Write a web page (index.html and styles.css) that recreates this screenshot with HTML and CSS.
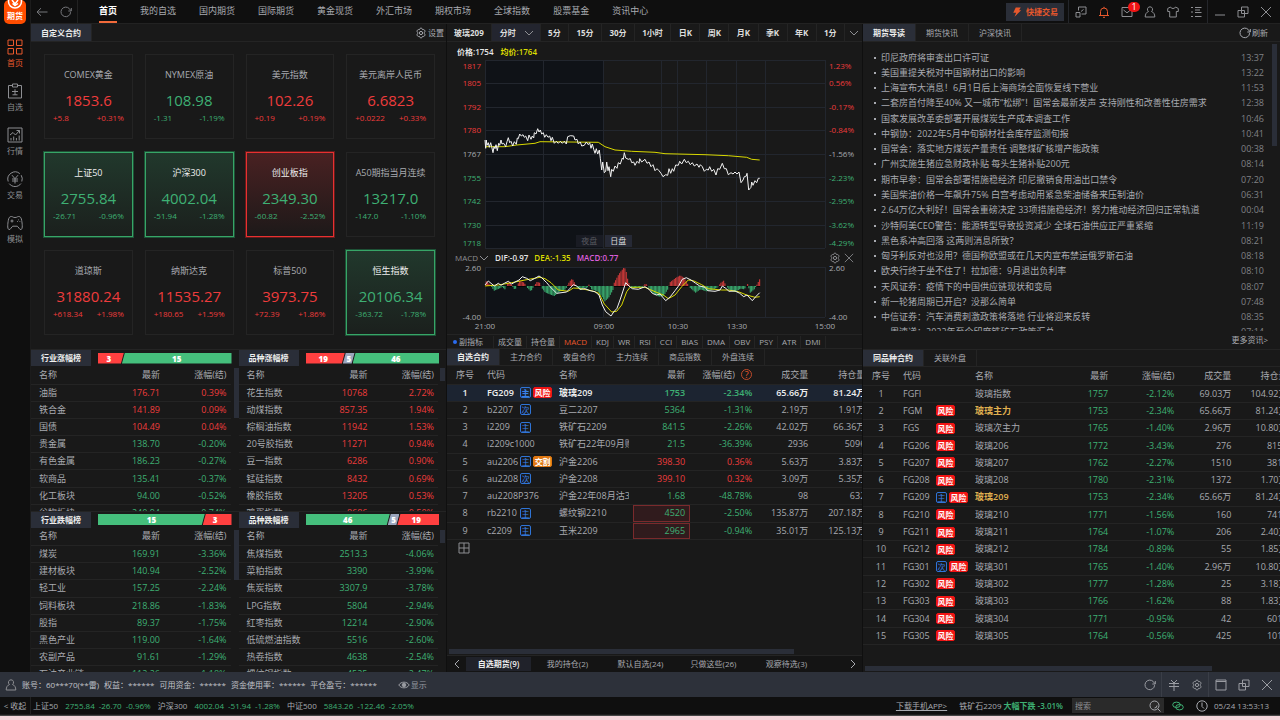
FILE: index.html
```html
<!DOCTYPE html>
<html lang="zh-CN">
<head>
<meta charset="utf-8">
<title>期货行情</title>
<link rel="stylesheet" href="styles.css">
</head>
<body>
<svg class="sprite" aria-hidden="true">
  <symbol id="i-back" viewBox="0 0 12 12"><path d="M11.5 6H1M5 2.200 1 6l4 3.800"/></symbol>
  <symbol id="i-reload" viewBox="0 0 12 12"><path d="M10.600 6.200A4.800 4.800 0 1 1 9.300 2.600L10.800 4.600M11.300 2v3H8.300"/></symbol>
  <symbol id="i-gear" viewBox="0 0 12 12"><path d="M6 1.200c1 0 1.300.5 1.500 1.400.9-.2 1.700-.1 2.200.8.5.9.2 1.500-.4 2.100v1c.6.6.9 1.200.4 2.100-.5.9-1.300 1-2.200.8-.2.9-.5 1.400-1.500 1.400s-1.300-.5-1.500-1.400c-.9.2-1.700.1-2.200-.8-.5-.9-.2-1.500.4-2.100v-1c-.6-.6-.9-1.200-.4-2.100.5-.9 1.300-1 2.200-.8C4.700 1.700 5 1.200 6 1.200Z"/><circle cx="6" cy="6" r="1.600"/></symbol>
  <symbol id="i-home" viewBox="0 0 16 16"><path d="M1 1h5.500v5.500H1zM9.500 1H15v5.500H9.500zM1 9.500h5.500V15H1zM9.500 9.500H15V15H9.500z"/></symbol>
  <symbol id="i-pick" viewBox="0 0 16 16"><path d="M5 2.500H1.500v12.500h13V2.500H11M5.500 1h5v3h-5zM8 6.200v5.600M5 8.500h6M5.500 11.800h5"/></symbol>
  <symbol id="i-quote" viewBox="0 0 16 16"><path d="M1 1h14v14H1zM3 8l3-2.500L8.500 8 12.500 3.500M9.500 3.500h3v3M4 13.500V11M6.700 13.500V9.500M9.400 13.500V11M12.200 13.500V8.500"/></symbol>
  <symbol id="i-trade" viewBox="0 0 16 16"><path d="M14 12.500A7.300 7.300 0 0 1 2.200 12.600M1.200 10.500A7.300 7.300 0 0 1 12.800 2.600M14.200 4.200a7.300 7.300 0 0 1 .6 6.300M5 4.200l3 3.500 3-3.500M8 7.700V12.500M5 8h6M5 10h6"/></symbol>
  <symbol id="i-game" viewBox="0 0 16 16"><path d="M4.500 1.500c-2 0-2.800 1.300-3.200 4-.5 3-1.200 8 .5 9 1.700.8 2.700-3 4-3.300h4.400c1.300.3 2.300 4.100 4 3.300 1.700-1 1-6 .5-9-.4-2.700-1.200-4-3.200-4-1.200 0-1.300 1-3.500 1S5.700 1.500 4.500 1.500ZM5 4.500v3M3.500 6h3M11.500 4.500v.8M10 6.500h.8M12.500 6.500h.8"/></symbol>
  <symbol id="i-pop" viewBox="0 0 12 12"><path d="M3.500 1h7.500v7H6.500M3.500 1v3.500M1 6.500h4V11H1zM6 5.500l2.500-2"/></symbol>
  <symbol id="i-bell" viewBox="0 0 12 12"><path d="M1 9.500h10M2.500 9.500V5.500a3.500 3.500 0 0 1 7 0v4M6 2V.8M5 11.300h2"/></symbol>
  <symbol id="i-mail" viewBox="0 0 12 12"><path d="M1 1.500h10v9H1zM2.500 4 6 6.800 9.500 4"/></symbol>
  <symbol id="i-user" viewBox="0 0 12 12"><path d="M6 .8a2.600 2.600 0 0 1 1.500 4.700C9.500 6.200 10.800 8 10.800 11H1.200c0-3 1.300-4.800 3.300-5.500A2.600 2.600 0 0 1 6 .8Z"/></symbol>
  <symbol id="i-shirt" viewBox="0 0 12 12"><path d="M3.500 1 .7 2.500v3h2V11h6.600V5.500h2v-3L8.500 1C8 3 4 3 3.500 1Z"/></symbol>
  <symbol id="i-list" viewBox="0 0 12 12"><path d="M1 1.500h2M1 6h2M1 10.500h2M5 1.500h6.500M5 4h5M5 6.500h6.500M5 10.500h6.500"/></symbol>
  <symbol id="i-min" viewBox="0 0 12 12"><path d="M1 9h10"/></symbol>
  <symbol id="i-restore" viewBox="0 0 12 12"><path d="M4.500 1H11v6.500H4.500zM1 4.500h6.500V11H1z"/></symbol>
  <symbol id="i-max" viewBox="0 0 12 12"><path d="M1 1h10v10H1zM1 2.500h10"/></symbol>
  <symbol id="i-close" viewBox="0 0 12 12"><path d="m1 1 10 10M11 1 1 11"/></symbol>
  <symbol id="i-yuan" viewBox="0 0 12 12"><path d="M3 1l3 3 3-3M6 4v8M1 4.500h10M1 7.500h10"/></symbol>
  <symbol id="i-down" viewBox="0 0 10 10"><path d="m1 3 4 4 4-4"/></symbol>
  <symbol id="i-left" viewBox="0 0 10 10"><path d="M7 1 3 5l4 4"/></symbol>
  <symbol id="i-right" viewBox="0 0 10 10"><path d="m3 1 4 4-4 4"/></symbol>
  <symbol id="i-add" viewBox="0 0 12 12"><path d="M1 1h10v10H1zM6 1v10M1 6h10"/></symbol>
  <symbol id="i-eye" viewBox="0 0 12 12"><path d="M.8 6C3 2.200 9 2.200 11.200 6 9 9.800 3 9.800.8 6Z"/><circle cx="6" cy="6" r="1.800" fill="currentColor"/></symbol>
  <symbol id="i-search" viewBox="0 0 12 12"><circle cx="5.500" cy="5.500" r="4.500"/><path d="m8.800 8.800 2.700 2.700M5.500 8A2.500 2.500 0 0 0 8 5.500"/></symbol>
  <symbol id="i-link" viewBox="0 0 12 12"><ellipse cx="4.500" cy="4.800" rx="3.800" ry="2.700"/><ellipse cx="7.500" cy="7.200" rx="3.800" ry="2.700"/></symbol>
  <symbol id="i-clock" viewBox="0 0 12 12"><circle cx="6" cy="6" r="5.200"/><path d="M6 2.500V6.500L8 8.500"/></symbol>
  <symbol id="i-bolt" viewBox="0 0 12 12"><path d="M4.500.5h6L8.500 4H11L3 11.800 5 7H1.500Z" fill="currentColor" stroke="none"/></symbol>
</svg>

<div class="app">
  <aside class="side">
    <div class="logo">
      <svg class="logo-mark" viewBox="0 0 16 9"><circle cx="8" cy="1.500" r="6.500"/><path d="M5 0 8 4l3-4M5.500 3.500 8 5.500l3-2"/></svg>
      <span>期货</span>
    </div>
    <a class="side-item on" href="#"><svg class="icon lg"><use href="#i-home"/></svg>首页</a>
    <a class="side-item" href="#"><svg class="icon lg"><use href="#i-pick"/></svg>自选</a>
    <a class="side-item" href="#"><svg class="icon lg"><use href="#i-quote"/></svg>行情</a>
    <a class="side-item" href="#"><svg class="icon lg"><use href="#i-trade"/></svg>交易</a>
    <a class="side-item" href="#"><svg class="icon lg"><use href="#i-game"/></svg>模拟</a>
  </aside>

  <header class="top">
    <div class="history">
      <button aria-label="后退"><svg class="icon"><use href="#i-back"/></svg></button>
      <button aria-label="重新加载"><svg class="icon"><use href="#i-reload"/></svg></button>
    </div>
    <nav class="nav">
      <a class="on" href="#">首页</a><a href="#">我的自选</a><a href="#">国内期货</a><a href="#">国际期货</a><a href="#">黄金现货</a><a href="#">外汇市场</a><a href="#">期权市场</a><a href="#">全球指数</a><a href="#">股票基金</a><a href="#">资讯中心</a>
    </nav>
    <button class="quick"><svg class="icon sm"><use href="#i-bolt"/></svg>快捷交易</button>
    <div class="tools">
      <button aria-label="弹出"><svg class="icon"><use href="#i-pop"/></svg></button>
      <button class="accent" aria-label="提醒"><svg class="icon"><use href="#i-bell"/></svg></button>
      <button class="mail" aria-label="消息"><svg class="icon"><use href="#i-mail"/></svg><span class="count">1</span></button>
      <button aria-label="用户"><svg class="icon"><use href="#i-user"/></svg></button>
      <button aria-label="皮肤"><svg class="icon"><use href="#i-shirt"/></svg></button>
      <button aria-label="菜单"><svg class="icon"><use href="#i-list"/></svg></button>
    </div>
    <div class="tools window">
      <button aria-label="最小化"><svg class="icon"><use href="#i-min"/></svg></button>
      <button aria-label="还原"><svg class="icon"><use href="#i-restore"/></svg></button>
      <button aria-label="关闭"><svg class="icon"><use href="#i-close"/></svg></button>
    </div>
  </header>

  <main class="panels">
    <section class="panel left">
      <div class="bar">
        <button class="tab on">自定义合约</button>
        <button class="bar-action"><svg class="icon"><use href="#i-gear"/></svg>设置</button>
      </div>
      <div class="cards" id="cards"></div>
      <div class="ranks" id="ranks"></div>
    </section>

    <section class="panel center">
      <div class="bar periods">
        <span class="symbol">玻璃209</span>
        <button class="on">分时 <svg class="icon sm"><use href="#i-down"/></svg></button><button>5分</button><button>15分</button><button>30分</button><button>1小时</button><button>日K</button><button>周K</button><button>月K</button><button>季K</button><button>年K</button><button>1分</button><button class="more" aria-label="更多周期"><svg class="icon sm"><use href="#i-down"/></svg></button>
      </div>
      <div class="legend"><span class="white">价格:1754</span><span class="yellow">均价:1764</span></div>
      <div class="plot">
        <svg id="price" viewBox="447 60 415 190"></svg>
        <div class="sessions"><button>夜盘</button><button class="on">日盘</button></div>
      </div>
      <div class="legend macd">
        <button class="ind">MACD<svg class="icon sm"><use href="#i-down"/></svg></button>
        <span class="white">DIF:-0.97</span><span class="yellow">DEA:-1.35</span><span class="pink">MACD:0.77</span>
        <span class="legend-tools"><button aria-label="指标设置"><svg class="icon"><use href="#i-gear"/></svg></button><button aria-label="关闭指标"><svg class="icon sm"><use href="#i-close"/></svg></button></span>
      </div>
      <div class="plot"><svg id="macd" viewBox="447 264 415 70"></svg></div>
      <div class="indicators">
        <button class="sub">副指标</button><button>成交量</button><button>持仓量</button><button class="on">MACD</button><button>KDJ</button><button>WR</button><button>RSI</button><button>CCI</button><button>BIAS</button><button>DMA</button><button>OBV</button><button>PSY</button><button>ATR</button><button>DMI</button>
      </div>
      <div class="bar tabs">
        <button class="tab on">自选合约</button><button class="tab">主力合约</button><button class="tab">夜盘合约</button><button class="tab">主力连续</button><button class="tab">商品指数</button><button class="tab">外盘连续</button>
      </div>
      <div class="table-box">
        <table class="quotes watch">
          <colgroup><col class="w36"><col class="w72"><col class="w78"><col class="w57"><col class="w67"><col class="w56"><col class="w57"></colgroup>
          <thead><tr><th class="c">序号</th><th>代码</th><th>名称</th><th class="r">最新</th><th class="r">涨幅(结) <span class="help">?</span></th><th class="r">成交量</th><th class="r">持仓量</th></tr></thead>
          <tbody id="watch"></tbody>
        </table>
        <button class="add" aria-label="添加合约"><svg class="icon"><use href="#i-add"/></svg></button>
      </div>
      <div class="hscroll"><i></i></div>
      <div class="groups">
        <button class="arrow" aria-label="上一组"><svg class="icon sm"><use href="#i-left"/></svg></button>
        <button class="on">自选期货(9)</button><button>我的持仓(2)</button><button>默认自选(24)</button><button>只做这些(26)</button><button>观察待选(3)</button>
        <button class="arrow next" aria-label="下一组"><svg class="icon sm"><use href="#i-right"/></svg></button>
      </div>
    </section>

    <section class="panel right">
      <div class="bar tabs">
        <button class="tab on">期货导读</button><button class="tab">期货快讯</button><button class="tab">沪深快讯</button>
        <button class="bar-action"><svg class="icon"><use href="#i-reload"/></svg>刷新</button>
      </div>
      <div class="news-box"><ul class="news" id="news"></ul><i class="vscroll tall"></i></div>
      <a class="news-more" href="#">更多资讯&gt;</a>
      <div class="bar tabs">
        <button class="tab on">同品种合约</button><button class="tab">关联外盘</button>
      </div>
      <div class="table-box">
        <table class="quotes related">
          <colgroup><col class="w36"><col class="w72"><col class="w90"><col class="w52"><col class="w66"><col class="w57"><col class="w56"></colgroup>
          <thead><tr><th class="c">序号</th><th>代码</th><th>名称</th><th class="r">最新</th><th class="r">涨幅(结)</th><th class="r">成交量</th><th class="r">持仓量</th></tr></thead>
          <tbody id="related"></tbody>
        </table>
      </div>
      <div class="hscroll"><i></i></div>
    </section>
  </main>

  <div class="account">
    <svg class="icon"><use href="#i-user"/></svg>
    <span>账号：60***70(**雷)</span><span>权益：******</span><span>可用资金：******</span><span>资金使用率：******</span><span>平仓盈亏：******</span>
    <button class="show"><svg class="icon"><use href="#i-eye"/></svg>显示</button>
    <div class="tools push"><button aria-label="刷新账户"><svg class="icon"><use href="#i-reload"/></svg></button></div>
    <div class="tools"><button aria-label="资金"><svg class="icon"><use href="#i-yuan"/></svg></button><button aria-label="设置"><svg class="icon"><use href="#i-gear"/></svg></button></div>
    <div class="tools"><button aria-label="最大化"><svg class="icon"><use href="#i-max"/></svg></button><button aria-label="还原"><svg class="icon"><use href="#i-restore"/></svg></button><button aria-label="关闭"><svg class="icon"><use href="#i-close"/></svg></button></div>
  </div>

  <footer class="status">
    <button class="fold">&lt; 收起</button>
    <span class="idx">上证50 <b>2755.84</b><b>-26.70</b><b>-0.96%</b></span>
    <span class="idx">沪深300 <b>4002.04</b><b>-51.94</b><b>-1.28%</b></span>
    <span class="idx">中证500 <b>5843.26</b><b>-122.46</b><b>-2.05%</b></span>
    <a class="download" href="#">下载手机APP&gt;</a>
    <span class="alert">铁矿石2209 <em>大幅下跌 -3.01%</em></span>
    <label class="search"><input type="text" placeholder="搜索" aria-label="搜索"><svg class="icon"><use href="#i-search"/></svg></label>
    <svg class="icon net"><use href="#i-link"/></svg>
    <svg class="icon"><use href="#i-clock"/></svg>
    <time>05/24 13:53:13</time>
  </footer>
  <div class="edge"></div>
</div>
<script src="app.js"></script>
</body>
</html>
```

FILE: styles.css
```css
* { box-sizing: border-box; }
body {
  margin: 0;
  background: #0f0f0f;
  color: #a8aab0;
  font: 9px/12px "Open Sans", "Noto Sans CJK SC", sans-serif;
}
button, input { font: inherit; color: inherit; background: none; border: 0; padding: 0; margin: 0; }
button { white-space: nowrap; display: flex; align-items: center; justify-content: center; }
a { color: inherit; text-decoration: none; }
.sprite { display: none; }
.icon { width: 12px; height: 12px; flex: none; fill: none; stroke: currentColor; stroke-width: 1; }
.icon.sm { width: 10px; height: 10px; }
.icon.lg { width: 16px; height: 16px; }
.up { color: #ee3c3c; }
.down { color: #3eb074; }
.white { color: #e6e6e6; }
.yellow { color: #dddd00; }
.pink { color: #dc5fdc; }

.app {
  height: 100vh;
  display: grid;
  grid-template-columns: 31px minmax(0, 1fr);
  grid-template-rows: 24px minmax(0, 1fr) 25px 18px 5px;
  overflow: hidden;
}

.side { grid-row: 1 / 3; display: flex; flex-direction: column; align-items: center; border-right: 1px solid #1c1c1c; font-size: 8px; }
.logo { width: 22px; height: 24px; margin-bottom: 15px; background: #ff4d00; border-radius: 5px; color: #fff; font-weight: 700; text-align: center; }
.logo-mark { display: block; width: 16px; height: 9px; margin: 0 auto; fill: none; stroke: #fff; stroke-width: 1.5; }
.logo span { display: block; line-height: 13px; }
.side-item { display: flex; flex-direction: column; align-items: center; height: 44px; gap: 2px; color: #8d8e92; }
.side-item.on { color: #e8582c; }

.top { display: flex; align-items: center; border-bottom: 1px solid #222; }
.history { display: flex; align-items: center; gap: 12px; padding: 0 5px 0 5px; height: 23px; border-right: 1px solid #222; color: #77787c; }
.nav { display: flex; gap: 23px; margin-left: 21px; flex: 1; }
.nav a { line-height: 21px; border-bottom: 2px solid transparent; white-space: nowrap; }
.nav .on { color: #fff; font-weight: 700; border-color: #f26a3a; }
.quick { width: 58px; height: 18px; gap: 4px; background: #2a2e38; color: #e8582c; font-size: 8px; font-weight: 700; margin-right: 4px; }
.tools { display: flex; height: 100%; border-left: 1px solid #24262b; color: #8d8e92; }
.tools button { width: 23px; }
.tools .accent { color: #e8582c; }
.window { margin-right: 3px; }
.mail { position: relative; }
.count { position: absolute; top: 2px; right: -2px; width: 12px; height: 10px; border-radius: 5px; background: #f01414; color: #fff; font-size: 9px; line-height: 10px; text-align: center; }

.panels { display: grid; grid-template-columns: minmax(0, 415fr) minmax(0, 415fr) minmax(0, 417fr); gap: 1px; min-height: 0; }
.panel { background: #191919; display: flex; flex-direction: column; min-height: 0; overflow: hidden; }

.bar { display: flex; height: 18px; flex: none; border-bottom: 1px solid #242424; font-size: 8px; }
.tab { padding: 0 10px; border-right: 1px solid #242424; }
.tab.on { background: #2a2e38; color: #eee; font-weight: 700; }
.bar-action { margin-left: auto; gap: 1px; padding-right: 2px; }
.right .bar-action { padding-right: 12px; }

.cards { display: grid; grid-template-columns: repeat(4, 1fr); gap: 13px 12px; padding: 12px 11px 14px 13px; flex: none; }
.card { height: 85px; padding: 13px 8px 0; border: 1px solid #242424; text-align: center; }
.card h3 { margin: 0 -6px 7px; font: inherit; line-height: 14px; white-space: nowrap; }
.card strong { display: block; font-size: 15px; font-weight: 400; line-height: 22px; }
.card div { display: flex; justify-content: space-between; margin-top: -1px; font-size: 8px; line-height: 16px; }
.card.hot h3 { color: #eee; }
.card.hot.fall { border: 1px solid #37a567; background: linear-gradient(#21382c, #1b201d); outline: 1px solid #1e5136; }
.card.hot.rise { border: 1px solid #e83030; background: linear-gradient(#492122, #1d1919); outline: 1px solid #611c1c; }

.ranks { flex: 1; min-height: 0; display: grid; grid-template: minmax(0, 1fr) minmax(0, 1fr) / 1fr 1fr; }
.rank { min-width: 0; overflow: hidden; border-top: 1px solid #242424; position: relative; }
.rank header { display: flex; align-items: center; height: 16px; gap: 7px; padding-right: 7px; font-size: 8px; font-weight: 700; }
.rank header span { width: 60px; line-height: 16px; background: #2a2e38; color: #eee; text-align: center; }
.ratio { flex: 1; display: flex; height: 11px; color: #fff; text-align: center; line-height: 11px; }
.ratio b { clip-path: polygon(3px 0, 100% 0, calc(100% - 3px) 100%, 0 100%); margin-left: -2px; }
.ratio b:first-child { clip-path: polygon(0 0, 100% 0, calc(100% - 3px) 100%, 0 100%); margin-left: 0; }
.ratio b:last-child { clip-path: polygon(3px 0, 100% 0, 100% 100%, 0 100%); }
.ratio .r { background: #ff4040; }
.ratio .g { background: #45bf7c; }
.ratio .n { background: #9ba6bd; }
.rank table { width: calc(100% - 8px); height: 156px; }
.rank td:first-child, .rank th:first-child { padding-left: 8px; }
.rank .r { padding-right: 4px; }
.vscroll { position: absolute; top: 18px; right: 0; width: 5px; height: 50px; background: #2a2e38; }
.vscroll.short { height: 13px; right: 1px; }
.vscroll.tall { top: 2px; right: 3px; height: 102px; }

table { border-collapse: collapse; table-layout: fixed; }
th, td { padding: 0; border-bottom: 1px solid #242424; font-weight: 400; text-align: left; white-space: nowrap; line-height: 12px; }
th { height: 18px; }
th.r, td.r { text-align: right; }
th.c, td.c { text-align: center; }

.periods { color: #ddd; font-weight: 700; }
.periods > * { flex: 1 0 auto; border-right: 1px solid #242424; padding: 0 3px; line-height: 17px; }
.periods .symbol { flex: none; padding: 0 7px; }
.periods .on { flex: none; width: 49px; background: #23252f; gap: 8px; padding: 0 2px 0 4px; }
.periods .icon { color: #8d8e92; }
.periods .more { flex: none; width: 17px; border: 0; }
.legend { display: flex; align-items: center; gap: 7px; height: 18px; flex: none; padding: 2px 10px 0; font-size: 8px; font-weight: 600; }
.legend.macd { height: 14px; gap: 6px; padding: 1px 8px 0; }
.ind { font-weight: 400; color: #8d8e92; gap: 1px; }
.legend-tools { display: flex; margin-left: auto; gap: 3px; color: #8d8e92; }
.plot { position: relative; flex: none; }
.plot > svg { display: block; width: 100%; font-size: 8px; }
.sessions { position: absolute; left: 31%; bottom: 3px; display: flex; gap: 2px; font-size: 8px; color: #55575e; }
.sessions button { width: 27px; height: 12px; background: #191b23; }
.sessions .on { background: #262935; color: #ddd; }
.grid { stroke: #22262e; }
.gain { fill: #ee3c3c; }
.loss { fill: #3eb074; }
.flat { fill: #a8aab0; }
.line { fill: none; stroke-width: 1; vector-effect: non-scaling-stroke; }
.hist-gain { fill: #bf3636; }
.hist-loss { fill: #37a068; }

.indicators { display: flex; align-items: center; height: 14px; flex: none; padding-left: 6px; font-size: 8px; border-top: 1px solid #242424; }
.indicators button { padding: 0 4px; height: 12px; border-right: 1px solid #242424; }
.indicators .on { color: #e8582c; }
.indicators .sub { padding: 0 10px 0 0; gap: 2px; }
.sub::before { content: ""; width: 4px; height: 4px; border-radius: 2px; background: #2a6cf0; }
.center .tabs { border-top: 1px solid #242424; }

.table-box { flex: 1; min-height: 0; overflow: hidden; }
.w36 { width: 36px; } .w52 { width: 52px; } .w56 { width: 56px; } .w57 { width: 57px; } .w66 { width: 66px; } .w67 { width: 67px; } .w72 { width: 72px; } .w78 { width: 78px; } .w90 { width: 90px; }
.watch { width: 102%; height: 174px; }
.related { width: 103%; height: 278px; }
.quotes td, .quotes th { padding: 0 4px; }
.quotes .r { padding: 0 5px; }
.clip { display: block; overflow: hidden; height: 12px; }
.code { display: inline-flex; gap: 2px; align-items: center; vertical-align: top; height: 12px; }
.code span { min-width: 31px; }
.code i { font-style: normal; font-size: 8px; line-height: 9px; border: 1px solid #2f74d6; border-radius: 2px; color: #3a82ea; width: 11px; height: 11px; text-align: center; }
.code .risk, .code .deliver { width: 19px; background: #f01414; border-color: #f01414; color: #fff; font-weight: 700; }
.code .deliver { background: #e07812; border-color: #e07812; }
.picked td { background: #1c2431; font-weight: 600; }
.picked td:not(.down) { color: #eee; }
.quotes .flash { background: #301b1d; box-shadow: inset 0 0 0 1px #7a2a2c; }
.gold { color: #e0b050; font-weight: 600; }
.help { display: inline-block; width: 11px; height: 11px; margin-left: 4px; border: 1px solid #c04a2a; border-radius: 6px; color: #e8582c; line-height: 9px; text-align: center; }
.add { margin: 2px 11px; color: #8d8e92; }
.hscroll { flex: none; height: 7px; padding: 1px 2px; }
.hscroll i { display: block; width: 84%; height: 5px; background: #2a2e38; }
.groups { display: flex; align-items: center; height: 17px; flex: none; border-top: 1px solid #242424; background: #141414; font-size: 8px; }
.groups button { width: 73px; height: 14px; }
.groups .on { width: 65px; background: #20222a; color: #eee; font-weight: 600; }
.groups .arrow { width: 19px; }
.groups .next { margin-left: auto; }

.news-box { position: relative; height: 289px; flex: none; overflow: hidden; padding: 8px 16px 0 11px; }
.news { list-style: none; margin: 0; padding: 0; height: 290px; display: grid; grid-auto-rows: 1fr; }
.news li { display: flex; align-items: center; }
.news li::before { content: ""; width: 2px; height: 2px; margin-right: 5px; background: #a8aab0; }
.news a { flex: 1; white-space: nowrap; }
.news time { color: #808186; }
.news-more { height: 18px; flex: none; align-self: flex-end; padding-right: 12px; font-size: 8px; line-height: 18px; }
.news-more + .tabs { border-top: 1px solid #242424; }

.account { grid-column: 1 / 3; display: flex; align-items: center; gap: 5px; padding-left: 5px; background: #2d313a; color: #c0c2c8; font-size: 8px; }
.account > .icon { color: #8d8e92; }
.show { gap: 1px; margin-left: 16px; color: #9a9ca2; }
.account .tools { margin-right: -5px; border-color: #3a3e47; color: #9a9ca2; }
.account .tools:last-child { margin-right: 2px; }
.account .push { margin-left: auto; border: 0; }

.status { grid-column: 1 / 3; display: flex; align-items: center; gap: 7px; font-size: 8px; white-space: nowrap; border-bottom: 1px solid #1c1c1c; }
.fold { width: 31px; height: 17px; margin-right: -5px; border-right: 1px solid #222; }
.idx { display: flex; gap: 4px; }
.idx b { font-weight: 400; color: #3eb074; }
.idx b:first-of-type { margin-left: 3px; }
.download { margin-left: auto; margin-right: 5px; text-decoration: underline; }
.alert { margin-right: 2px; }
.alert em { font-style: normal; font-weight: 600; color: #3eb074; }
.search { display: flex; align-items: center; width: 92px; height: 15px; background: #2a2a2a; padding: 0 3px; }
.search input { flex: 1; min-width: 0; outline: 0; }
.search input::placeholder { color: #8d8e92; }
.net { color: #3eb074; margin: 0 5px 0 1px; }
.status time { margin: 0 11px 0 -1px; }
.edge { grid-column: 1 / 3; background: #f4d5da; border-top: 1px solid #444; }
```

FILE: app.js
```js
const $ = id => document.getElementById(id);
const tone = v => (String(v).startsWith('-') ? 'down' : 'up');

const cards = [
  ['COMEX黄金', '1853.6', '+5.8', '+0.31%'],
  ['NYMEX原油', '108.98', '-1.31', '-1.19%'],
  ['美元指数', '102.26', '+0.19', '+0.19%'],
  ['美元离岸人民币', '6.6823', '+0.0222', '+0.33%'],
  ['上证50', '2755.84', '-26.71', '-0.96%', 'hot fall'],
  ['沪深300', '4002.04', '-51.94', '-1.28%', 'hot fall'],
  ['创业板指', '2349.30', '-60.82', '-2.52%', 'hot rise'],
  ['A50期指当月连续', '13217.0', '-147.0', '-1.10%'],
  ['道琼斯', '31880.24', '+618.34', '+1.98%'],
  ['纳斯达克', '11535.27', '+180.65', '+1.59%'],
  ['标普500', '3973.75', '+72.39', '+1.86%'],
  ['恒生指数', '20106.34', '-363.72', '-1.78%', 'hot fall']
];
$('cards').innerHTML = cards.map(([n, v, d, p, k]) =>
  `<article class="card ${k || ''}"><h3>${n}</h3><strong class="${tone(d)}">${v}</strong><div class="${tone(d)}"><span>${d}</span><span>${p}</span></div></article>`).join('');

const ranks = [
  { title: '行业涨幅榜', ratio: [['r', 3, 17], ['g', 15, 85]], scroll: '', rows: [
    ['油脂', '176.71', '0.39%'], ['铁合金', '141.89', '0.09%'], ['国债', '104.49', '0.04%'], ['贵金属', '138.70', '-0.20%'],
    ['有色金属', '186.23', '-0.27%'], ['软商品', '135.41', '-0.37%'], ['化工板块', '94.00', '-0.52%'], ['谷物板块', '240.94', '-0.74%']] },
  { title: '品种涨幅榜', ratio: [['r', 19, 27], ['n', 5, 9], ['g', 46, 66]], scroll: 'short', rows: [
    ['花生指数', '10768', '2.72%'], ['动煤指数', '857.35', '1.94%'], ['棕榈油指数', '11942', '1.53%'], ['20号胶指数', '11271', '0.94%'],
    ['豆一指数', '6286', '0.90%'], ['锰硅指数', '8432', '0.69%'], ['橡胶指数', '13205', '0.53%'], ['鸡蛋指数', '8686', '0.50%']] },
  { title: '行业跌幅榜', ratio: [['g', 15, 82], ['r', 3, 19]], scroll: '', rows: [
    ['煤炭', '169.91', '-3.36%'], ['建材板块', '140.94', '-2.52%'], ['轻工业', '157.25', '-2.24%'], ['饲料板块', '218.86', '-1.83%'],
    ['股指', '89.37', '-1.75%'], ['黑色产业', '119.00', '-1.64%'], ['农副产品', '91.61', '-1.29%'], ['石油产业链', '112.26', '-1.18%']] },
  { title: '品种跌幅榜', ratio: [['g', 46, 65], ['n', 5, 9], ['r', 19, 29]], scroll: 'short', rows: [
    ['焦煤指数', '2513.3', '-4.06%'], ['菜粕指数', '3390', '-3.99%'], ['焦炭指数', '3307.9', '-3.78%'], ['LPG指数', '5804', '-2.94%'],
    ['红枣指数', '12214', '-2.90%'], ['低硫燃油指数', '5516', '-2.60%'], ['热卷指数', '4638', '-2.54%'], ['螺纹钢指数', '4525', '-2.47%']] }
];
$('ranks').innerHTML = ranks.map(r => `<section class="rank">
  <header><span>${r.title}</span><div class="ratio">${r.ratio.map(([c, n, w]) => `<b class="${c}" style="flex:${w} 0 0">${n}</b>`).join('')}</div></header>
  <table><thead><tr><th>名称</th><th class="r">最新</th><th class="r">涨幅(结)</th></tr></thead>
  <tbody>${r.rows.map(([n, v, p]) => `<tr><td>${n}</td><td class="r ${tone(p)}">${v}</td><td class="r ${tone(p)}">${p}</td></tr>`).join('')}</tbody></table>
  <i class="vscroll ${r.scroll}"></i></section>`).join('');

const badge = { 主: 'main', 次: 'next', 风险: 'risk', 交割: 'deliver' };
const row = ([code, tags, name, price, pct, vol, hold, flag], i) => `<tr class="${flag === 'picked' ? flag : ''}">
  <td class="c">${i + 1}</td>
  <td><div class="code"><span>${code}</span>${tags.map(t => `<i class="${badge[t]}">${t}</i>`).join('')}</div></td>
  <td><span class="clip ${flag === 'gold' ? flag : ''}">${name}</span></td>
  <td class="r ${tone(pct)} ${flag === 'flash' ? flag : ''}">${price}</td>
  <td class="r ${tone(pct)}">${pct}</td><td class="r">${vol}</td><td class="r">${hold}</td></tr>`;
$('watch').innerHTML = [
  ['FG209', ['主', '风险'], '玻璃209', '1753', '-2.34%', '65.66万', '81.24万', 'picked'],
  ['b2207', ['次'], '豆二2207', '5364', '-1.31%', '2.19万', '1.91万'],
  ['i2209', ['主'], '铁矿石2209', '841.5', '-2.26%', '42.02万', '66.36万'],
  ['i2209c1000', [], '铁矿石22年09月购1000', '21.5', '-36.39%', '2936', '5096'],
  ['au2206', ['主', '交割'], '沪金2206', '398.30', '0.36%', '5.63万', '3.83万'],
  ['au2208', ['次'], '沪金2208', '399.10', '0.32%', '3.09万', '5.35万'],
  ['au2208P376', [], '沪金22年08月沽376', '1.68', '-48.78%', '98', '632'],
  ['rb2210', ['主'], '螺纹钢2210', '4520', '-2.50%', '135.87万', '207.18万', 'flash'],
  ['c2209', ['主'], '玉米2209', '2965', '-0.94%', '35.01万', '125.13万', 'flash']
].map(row).join('');
$('related').innerHTML = [
  ['FGFI', [], '玻璃指数', '1757', '-2.12%', '69.03万', '104.92万'],
  ['FGM', ['风险'], '玻璃主力', '1753', '-2.34%', '65.66万', '81.24万', 'gold'],
  ['FGS', ['风险'], '玻璃次主力', '1765', '-1.40%', '2.96万', '10.80万'],
  ['FG206', ['风险'], '玻璃206', '1772', '-3.43%', '276', '8158'],
  ['FG207', ['风险'], '玻璃207', '1762', '-2.27%', '1510', '3811'],
  ['FG208', ['风险'], '玻璃208', '1780', '-2.31%', '1372', '1.70万'],
  ['FG209', ['主', '风险'], '玻璃209', '1753', '-2.34%', '65.66万', '81.24万', 'gold'],
  ['FG210', ['风险'], '玻璃210', '1771', '-1.56%', '160', '7412'],
  ['FG211', ['风险'], '玻璃211', '1764', '-1.07%', '206', '2.40万'],
  ['FG212', ['风险'], '玻璃212', '1784', '-0.89%', '55', '1.85万'],
  ['FG301', ['次', '风险'], '玻璃301', '1765', '-1.40%', '2.96万', '10.80万'],
  ['FG302', ['风险'], '玻璃302', '1777', '-1.28%', '25', '3.18万'],
  ['FG303', ['风险'], '玻璃303', '1766', '-1.62%', '88', '1.83万'],
  ['FG304', ['风险'], '玻璃304', '1771', '-0.95%', '42', '6015'],
  ['FG305', ['风险'], '玻璃305', '1764', '-0.56%', '425', '1012']
].map(row).join('');

$('news').innerHTML = [
  ['印尼政府将审查出口许可证', '13:37'],
  ['美国重提关税对中国钢材出口的影响', '13:22'],
  ['上海宣布大消息！6月1日后上海商场全面恢复线下营业', '11:53'],
  ['二套房首付降至40% 又一城市“松绑”！国常会最新发声 支持刚性和改善性住房需求', '12:38'],
  ['国家发展改革委部署开展煤炭生产成本调查工作', '10:46'],
  ['中钢协：2022年5月中旬钢材社会库存监测旬报', '10:41'],
  ['国常会：落实地方煤炭产量责任 调整煤矿核增产能政策', '00:38'],
  ['广州实施生猪应急财政补贴 每头生猪补贴200元', '08:14'],
  ['期市早参：国常会部署措施稳经济 印尼撤销食用油出口禁令', '07:20'],
  ['美国柴油价格一年飙升75% 白宫考虑动用紧急柴油储备来压制油价', '06:31'],
  ['2.64万亿大利好！国常会重磅决定 33项措施稳经济！努力推动经济回归正常轨道', '00:04'],
  ['沙特阿美CEO警告：能源转型导致投资减少 全球石油供应正严重紧缩', '11:19'],
  ['黑色系冲高回落 这两则消息所致？', '08:21'],
  ['匈牙利反对也没用？德国称欧盟或在几天内宣布禁运俄罗斯石油', '08:18'],
  ['欧央行终于坐不住了！拉加德：9月退出负利率', '08:10'],
  ['天风证券：疫情下的中国供应链现状和变局', '08:07'],
  ['新一轮猪周期已开启？没那么简单', '07:48'],
  ['中信证券：汽车消费刺激政策将落地 行业将迎来反转', '08:35'],
  ['一周速递：2022年至今印度铁矿石政策汇总', '07:14']
].map(([t, h]) => `<li><a href="#">${t}</a><time>${h}</time></li>`).join('');

/* Charts: series are stored in thirds of a chart unit, offset by x = 445. */
const pts = (s, y0) => s.split(' ').map(p => p.split(',').map(Number)).map(([x, y]) => `${(445 + x / 3).toFixed(1)},${(y0 + y / 3).toFixed(1)}`).join(' ');
const line = (s, y0, c) => `<polyline class="line" stroke="${c}" points="${pts(s, y0)}"/>`;
const columns = [485.5, 543.5, 603.5, 661.5, 677.5, 706.5, 736.5, 765.5, 825.5];
const vgrid = (a, b) => columns.map(x => `<path class="grid" d="M${x} ${a}V${b}"/>`).join('');
const hgrid = ys => ys.map(y => `<path class="grid" d="M485 ${y}H825"/>`).join('');
const label = (x, y, t, c, a) => `<text x="${x}" y="${y}" class="${c}" text-anchor="${a}">${t}</text>`;

const levels = [
  [69, '1817', '1.23%', 'gain'], [86, '1805', '0.56%', 'gain'], [110, '1792', '-0.17%', 'gain'], [133, '1780', '-0.84%', 'gain'],
  [157, '1767', '-1.56%', 'flat'], [181, '1755', '-2.23%', 'loss'], [204, '1742', '-2.95%', 'loss'], [228, '1730', '-3.62%', 'loss'], [246, '1718', '-4.29%', 'loss']
];
const price = '120,420 122,445 124,420 126,436 130,428 133,442 137,428 140,440 144,458 147,440 150,446 153,434 157,452 161,430 164,436 168,420 171,432 176,430 182,440 186,425 190,413 194,428 198,424 203,438 208,425 214,433 217,414 220,416 224,402 229,408 234,404 238,412 242,408 248,422 252,405 258,418 262,408 266,414 268,398 273,402 278,386 282,396 286,390 290,402 295,398 299,412 304,404 309,412 314,408 318,422 322,412 328,430 334,424 340,430 346,424 352,430 358,424 364,432 368,410 376,407 386,408 390,420 396,418 400,432 406,426 410,438 418,436 424,426 430,434 434,428 438,445 442,432 446,448 450,460 454,446 458,462 463,450 466,475 470,510 473,486 478,518 482,514 485,486 489,512 492,500 497,530 500,508 505,514 510,498 516,505 520,488 526,492 532,474 535,478 538,458 542,474 550,478 556,476 560,488 566,486 570,496 576,484 582,490 584,476 590,486 600,478 606,490 612,486 618,500 624,494 630,512 636,506 642,512 648,520 654,530 662,524 668,526 672,506 677,520 682,506 686,514 692,495 700,496 704,484 710,492 718,478 724,488 730,484 736,494 742,488 748,498 756,492 762,502 766,494 772,500 778,514 784,508 790,510 794,500 800,514 806,508 813,525 818,506 824,508 832,490 838,506 844,506 850,524 858,518 864,522 870,516 876,522 882,516 888,548 894,540 898,530 904,528 906,520 911,570 918,562 920,546 924,556 930,542 935,548 940,535 944,535';
const average = '120,440 180,440 215,435 270,430 285,425 460,427 480,440 510,450 560,454 630,457 660,461 780,464 850,467 905,472 920,478 944,480';
$('price').innerHTML = '<rect x="485" y="60" width="118" height="188" fill="#0f1217"/>'
  + hgrid([60.5, 83.5, 107.5, 130.5, 154.5, 177.5, 201.5, 225.5, 248.5]) + vgrid(60, 248)
  + levels.map(([y, a, b, c]) => label(481, y, a, c, 'end') + label(829, y, b, c, 'start')).join('')
  + line(average, 0, '#d8d800') + line(price, 0, '#f2f2f2');

const hist = [[122,14],[134,4],[140,-6],[146,-14],[160,-8],[170,-3],[178,-10],[184,4],[192,14],[200,0],[208,-12],[216,4],[222,16],[236,10],[244,-4],[256,-16],[264,-2],[274,12],[282,10],[290,-8],[300,-20],[326,-30],[340,-18],[360,-10],[372,14],[380,22],[388,8],[394,-4],[406,-12],[416,-4],[424,-8],[430,4],[438,-10],[456,-16],[468,-30],[478,-46],[490,-34],[502,-12],[506,10],[520,36],[534,54],[540,52],[546,22],[552,2],[560,-8],[576,-4],[590,-4],[600,8],[608,-2],[620,-20],[640,-32],[654,-30],[668,-8],[672,10],[690,24],[704,32],[716,24],[724,10],[732,-4],[750,-20],[764,-10],[782,-16],[800,-12],[816,-4],[826,10],[834,16],[842,0],[852,-12],[866,-18],[886,-8],[896,-10],[906,6],[914,-20],[926,-10],[934,4],[942,20]];
let bars = '';
for (let x = 122, k = 0; x <= 942; x += 4) {
  while (k < hist.length - 2 && hist[k + 1][0] < x) k++;
  const [[x0, h0], [x1, h1]] = [hist[k], hist[k + 1]];
  const h = (h0 + (h1 - h0) * (x - x0) / (x1 - x0)) / 3;
  bars += `<rect class="${h > 0 ? 'hist-gain' : 'hist-loss'}" x="${(445 + x / 3).toFixed(1)}" y="${(h > 0 ? 286 - h : 286).toFixed(1)}" width="1.2" height="${Math.abs(h).toFixed(1)}"/>`;
}
const dif = '120,315 130,303 138,310 148,318 160,310 168,316 178,310 190,304 200,312 210,306 222,300 232,290 245,295 256,302 268,296 282,288 290,293 305,308 315,320 335,340 365,336 375,325 385,314 395,318 405,328 420,326 435,332 450,335 462,345 472,375 482,395 498,408 506,396 516,385 525,360 535,330 542,308 552,318 562,326 580,328 600,320 612,328 622,340 634,345 645,342 662,362 676,350 690,332 702,316 712,298 724,293 738,300 752,310 764,318 780,322 788,332 810,334 825,330 832,318 842,325 852,334 870,333 884,340 896,350 906,345 922,362 932,350 944,338';
const dea = '120,318 160,315 200,308 240,300 285,292 300,296 318,308 340,330 370,334 385,324 400,325 440,332 462,340 478,372 500,396 515,394 530,375 545,335 555,322 600,322 630,335 655,345 670,356 690,345 710,320 730,300 745,302 770,314 790,326 830,330 850,330 880,335 905,345 930,352 944,350';
$('macd').innerHTML = '<rect x="485" y="267" width="118" height="50" fill="#0f1217"/>'
  + hgrid([267.5, 317.5]) + vgrid(267, 317) + '<path stroke="#050505" d="M485 286.5H760"/>' + bars
  + line(dea, 180, '#d8d800') + line(dif, 180, '#f2f2f2')
  + label(481, 271, '2.60', 'flat', 'end') + label(829, 271, '2.60', 'flat', 'start')
  + label(481, 320, '-4.00', 'flat', 'end') + label(829, 320, '-4.00', 'flat', 'start')
  + [[485, '21:00'], [604, '09:00'], [678, '10:30'], [737, '13:30'], [825, '15:00']].map(([x, t]) => label(x, 329, t, 'flat', 'middle')).join('');
```
